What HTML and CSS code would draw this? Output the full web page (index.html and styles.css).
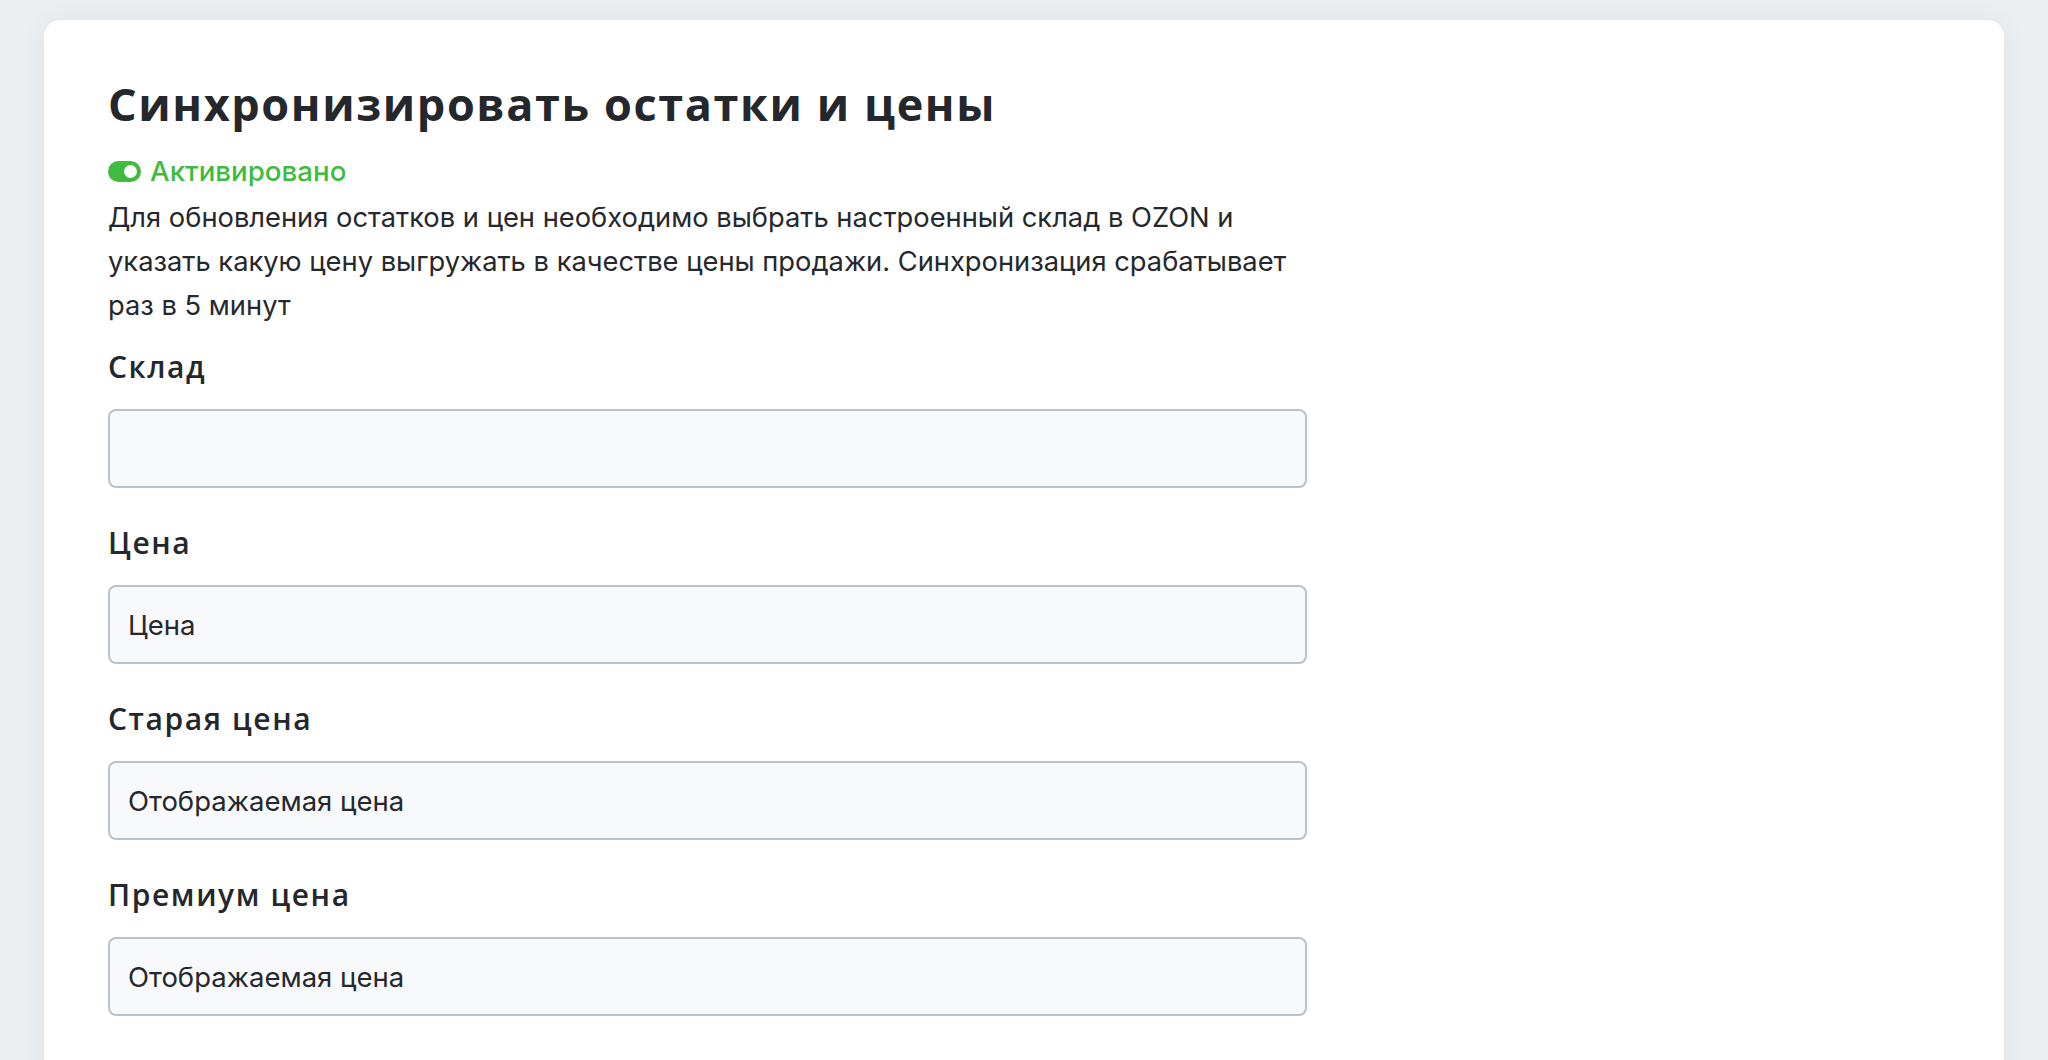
FILE: index.html
```html
<!DOCTYPE html>
<html lang="ru">
<head>
  <meta charset="UTF-8">
  <meta name="viewport" content="width=device-width, initial-scale=1">
  <title>Синхронизация остатков и цен</title>
  <link rel="stylesheet" href="styles.css">
</head>
<body>
  <div class="card">
    <h1 class="card-title">Синхронизировать остатки и цены</h1>

    <div class="status">
      <span class="toggle"><span class="knob"></span></span>
      Активировано
    </div>

    <p class="desc">Для обновления остатков и цен необходимо выбрать настроенный склад в OZON и указать какую цену выгружать в качестве цены продажи. Синхронизация срабатывает раз в 5 минут</p>

    <div class="field">
      <label for="stock">Склад</label>
      <input class="input" id="stock" type="text" value="">
    </div>

    <div class="field">
      <label for="price">Цена</label>
      <input class="input" id="price" type="text" value="Цена">
    </div>

    <div class="field">
      <label for="oldPrice">Старая цена</label>
      <input class="input" id="oldPrice" type="text" value="Отображаемая цена">
    </div>

    <div class="field">
      <label for="premiumPrice">Премиум цена</label>
      <input class="input" id="premiumPrice" type="text" value="Отображаемая цена">
    </div>
  </div>
</body>
</html>
```

FILE: styles.css
```css
* { box-sizing: border-box; }

body {
  margin: 0;
  padding: 20px 44px 0;
  background: #eceff2;
  font-family: 'Inter', 'Noto Sans', sans-serif;
  color: #25282c;
  overflow: hidden;
}

.card {
  background: #ffffff;
  border-radius: 16px;
  box-shadow: 0 0 24px rgba(40, 50, 70, 0.06);
  padding: 58px 64px;
  min-height: 1100px;
}

.card-title {
  font-family: 'Open Sans', sans-serif;
  font-weight: 700;
  font-size: 45px;
  line-height: 52px;
  letter-spacing: 1.6px;
  margin: 0 0 25px;
  color: #24272c;
}

.status {
  display: flex;
  align-items: center;
  gap: 9px;
  font-size: 27.7px;
  line-height: 32px;
  font-weight: 500;
  color: #3fbb3f;
}

.toggle {
  width: 33px;
  height: 21px;
  border-radius: 11px;
  background: #3fbb3f;
  display: flex;
  align-items: center;
  justify-content: flex-end;
  padding: 0 4px;
}

.knob {
  width: 13px;
  height: 13px;
  border-radius: 50%;
  background: #ffffff;
}

.desc {
  font-size: 27.3px;
  line-height: 44px;
  margin: 9px 0 19px;
  max-width: 1199px;
}

.field {
  max-width: 1199px;
  margin-bottom: 35px;
}

.field label {
  display: block;
  font-family: 'Open Sans', sans-serif;
  font-weight: 600;
  font-size: 30px;
  line-height: 40px;
  letter-spacing: 1.6px;
  margin-bottom: 22px;
  color: #24272c;
}

.input {
  display: block;
  width: 100%;
  height: 79px;
  padding: 0 18px;
  border: 2px solid #b9c3ce;
  border-radius: 8px;
  background: #f8f9fb;
  font-family: 'Inter', 'Noto Sans', sans-serif;
  font-size: 27.5px;
  color: #25282c;
  outline: none;
}
```
